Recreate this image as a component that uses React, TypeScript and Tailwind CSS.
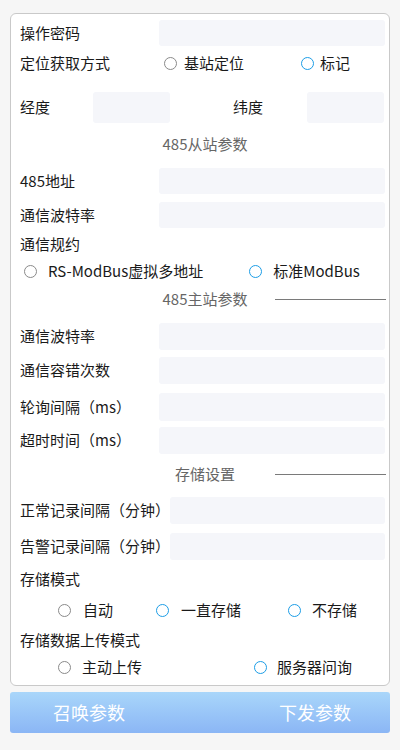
import React from "react";

const font = { fontFamily: '"Noto Sans CJK SC", "Noto Sans", sans-serif' };

function Radio({ blue }: { blue?: boolean }) {
  return (
    <span
      className={
        "inline-block w-[13px] h-[13px] rounded-full border shrink-0 " +
        (blue ? "border-[#1c9de6]" : "border-[#8a8a8a]")
      }
    />
  );
}

function Input({ className }: { className: string }) {
  return <div className={"bg-[#f5f6fa] rounded-[3px] " + className} />;
}

function InputRow({ label, mt, h, inputLeft = 159 }: { label: string; mt: string; h: string; inputLeft?: number }) {
  return (
    <div className={"flex items-center " + mt + " " + h}>
      <div className={"pb-[2px] " + (inputLeft === 159 ? "w-[139px]" : "w-[150px]")}>{label}</div>
      <Input className="flex-1 h-full" />
    </div>
  );
}

function Section({ title, line, mt }: { title: string; line?: boolean; mt: string }) {
  return (
    <div className={"grid grid-cols-[1fr_auto_1fr] items-center h-[24px] pl-[5px] " + mt}>
      <div />
      <div className="text-[#666] pb-[2px]">{title}</div>
      <div className="flex justify-end">
        {line ? <div className="w-[111px] h-px bg-[#7a7a7a] mr-[-1px]" /> : null}
      </div>
    </div>
  );
}

export default function App() {
  return (
    <div className="w-[400px] h-[750px] bg-[#f6f6f6] pt-[13px] px-[10px] text-[15px] text-[#1a1a1a] leading-none" style={font}>
      <div className="bg-white border border-[#c9c9c9] rounded-[6px] pl-[9px] pr-[4px] pt-[6px] pb-[6px]">
        <InputRow label="操作密码" mt="" h="h-[26px]" />
        <div className="flex items-center mt-[4px] h-[26px]">
          <div className="w-[144px] pb-[2px]">定位获取方式</div>
          <Radio />
          <span className="ml-[7px] pb-[2px]">基站定位</span>
          <span className="ml-[57px]"><Radio blue /></span>
          <span className="ml-[6px] pb-[2px]">标记</span>
        </div>
        <div className="flex items-center mt-[16px] h-[31px]">
          <div className="w-[73px] pb-[2px]">经度</div>
          <Input className="w-[77px] h-full" />
          <div className="ml-[63px] w-[74px] pb-[2px]">纬度</div>
          <Input className="w-[77px] h-full" />
        </div>
        <Section title="485从站参数" mt="mt-[9px]" />
        <InputRow label="485地址" mt="mt-[12px]" h="h-[26px]" />
        <InputRow label="通信波特率" mt="mt-[8px]" h="h-[26px]" />
        <div className="flex items-center mt-[4px] h-[24px] pb-[2px]">通信规约</div>
        <div className="flex items-center mt-[3px] h-[24px]">
          <span className="ml-[4px]"><Radio /></span>
          <span className="ml-[11px] pb-[2px]">RS-ModBus虚拟多地址</span>
          <span className="ml-[46px]"><Radio blue /></span>
          <span className="ml-[11px] pb-[2px]">标准ModBus</span>
        </div>
        <Section title="485主站参数" line mt="mt-[4px]" />
        <InputRow label="通信波特率" mt="mt-[12px]" h="h-[27px]" />
        <InputRow label="通信容错次数" mt="mt-[7px]" h="h-[27px]" />
        <InputRow label="轮询间隔（ms）" mt="mt-[9px]" h="h-[28px]" />
        <InputRow label="超时时间（ms）" mt="mt-[6px]" h="h-[27px]" />
        <Section title="存储设置" line mt="mt-[8px]" />
        <InputRow label="正常记录间隔（分钟）" mt="mt-[11px]" h="h-[27px]" inputLeft={170} />
        <InputRow label="告警记录间隔（分钟）" mt="mt-[9px]" h="h-[27px]" inputLeft={170} />
        <div className="flex items-center mt-[7px] h-[24px] pb-[2px]">存储模式</div>
        <div className="flex items-center mt-[7px] h-[24px]">
          <span className="ml-[38px]"><Radio /></span>
          <span className="ml-[12px] pb-[2px]">自动</span>
          <span className="ml-[43px]"><Radio blue /></span>
          <span className="ml-[12px] pb-[2px]">一直存储</span>
          <span className="ml-[47px]"><Radio blue /></span>
          <span className="ml-[11px] pb-[2px]">不存储</span>
        </div>
        <div className="flex items-center mt-[6px] h-[24px] pb-[2px]">存储数据上传模式</div>
        <div className="flex items-center mt-[3px] h-[24px]">
          <span className="ml-[38px]"><Radio /></span>
          <span className="ml-[11px] pb-[2px]">主动上传</span>
          <span className="ml-[112px]"><Radio blue /></span>
          <span className="ml-[10px] pb-[2px]">服务器问询</span>
        </div>
      </div>
      <div className="mt-[6px] h-[41px] rounded-[3px] bg-gradient-to-b from-[#a9d6fa] to-[#8bb6f5] flex items-center text-white text-[18px]">
        <div className="w-[158px] text-center pb-[2px]">召唤参数</div>
        <div className="flex-1" />
        <div className="w-[150px] text-center pb-[2px]">下发参数</div>
      </div>
    </div>
  );
}
